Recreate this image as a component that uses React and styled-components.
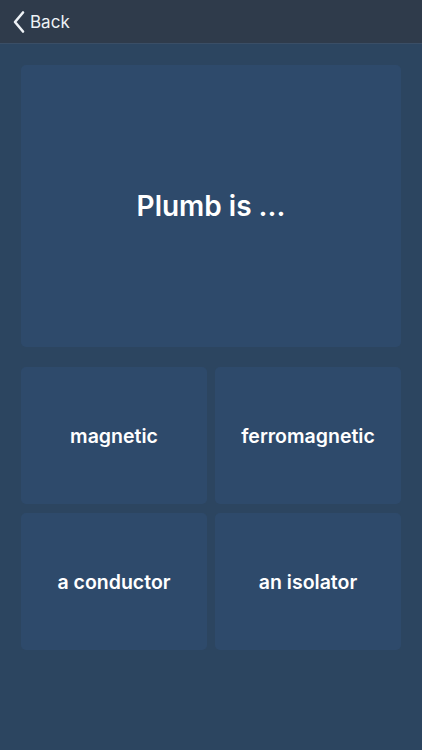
import React from 'react';
import styled, { createGlobalStyle } from 'styled-components';

const GlobalStyle = createGlobalStyle`
  html, body {
    margin: 0;
    padding: 0;
    background: #2c4560;
    font-family: Inter, "Noto Sans", sans-serif;
  }
`;

const Screen = styled.div`
  width: 422px;
  height: 750px;
  background: #2c4560;
  display: flex;
  flex-direction: column;
`;

const Header = styled.header`
  height: 44px;
  box-sizing: border-box;
  background: #2f3b4b;
  border-bottom: 1px solid #3a4e66;
  display: flex;
  align-items: center;
  padding-left: 12px;
`;

const BackButton = styled.button`
  display: flex;
  align-items: center;
  gap: 4px;
  background: none;
  border: none;
  padding: 0;
  color: #eef2f6;
  font-family: inherit;
  font-size: 17px;
  cursor: pointer;
`;

const Content = styled.main`
  padding: 21px 21px 0 21px;
  display: flex;
  flex-direction: column;
  gap: 20px;
`;

const Card = styled.div`
  background: #2e4a6b;
  border-radius: 5px;
  display: flex;
  align-items: center;
  justify-content: center;
  color: #ffffff;
  font-weight: 600;
`;

const Question = styled(Card)`
  height: 282px;
  font-size: 28px;
`;

const Answers = styled.div`
  display: grid;
  grid-template-columns: 1fr 1fr;
  grid-auto-rows: 137px;
  column-gap: 8px;
  row-gap: 9px;
`;

const Answer = styled(Card)`
  font-size: 19.5px;
  cursor: pointer;
`;

const answers = ['magnetic', 'ferromagnetic', 'a conductor', 'an isolator'];

const App = () => (
  <>
    <GlobalStyle />
    <Screen>
      <Header>
        <BackButton>
          <svg width="14" height="24" viewBox="0 0 14 24" fill="none">
            <path d="M11 2.5L3 12l8 9.5" stroke="#eef2f6" strokeWidth="2.6" strokeLinecap="round" strokeLinejoin="round" />
          </svg>
          Back
        </BackButton>
      </Header>
      <Content>
        <Question>Plumb is ...</Question>
        <Answers>
          {answers.map((a) => (
            <Answer key={a}>{a}</Answer>
          ))}
        </Answers>
      </Content>
    </Screen>
  </>
);

export default App;
